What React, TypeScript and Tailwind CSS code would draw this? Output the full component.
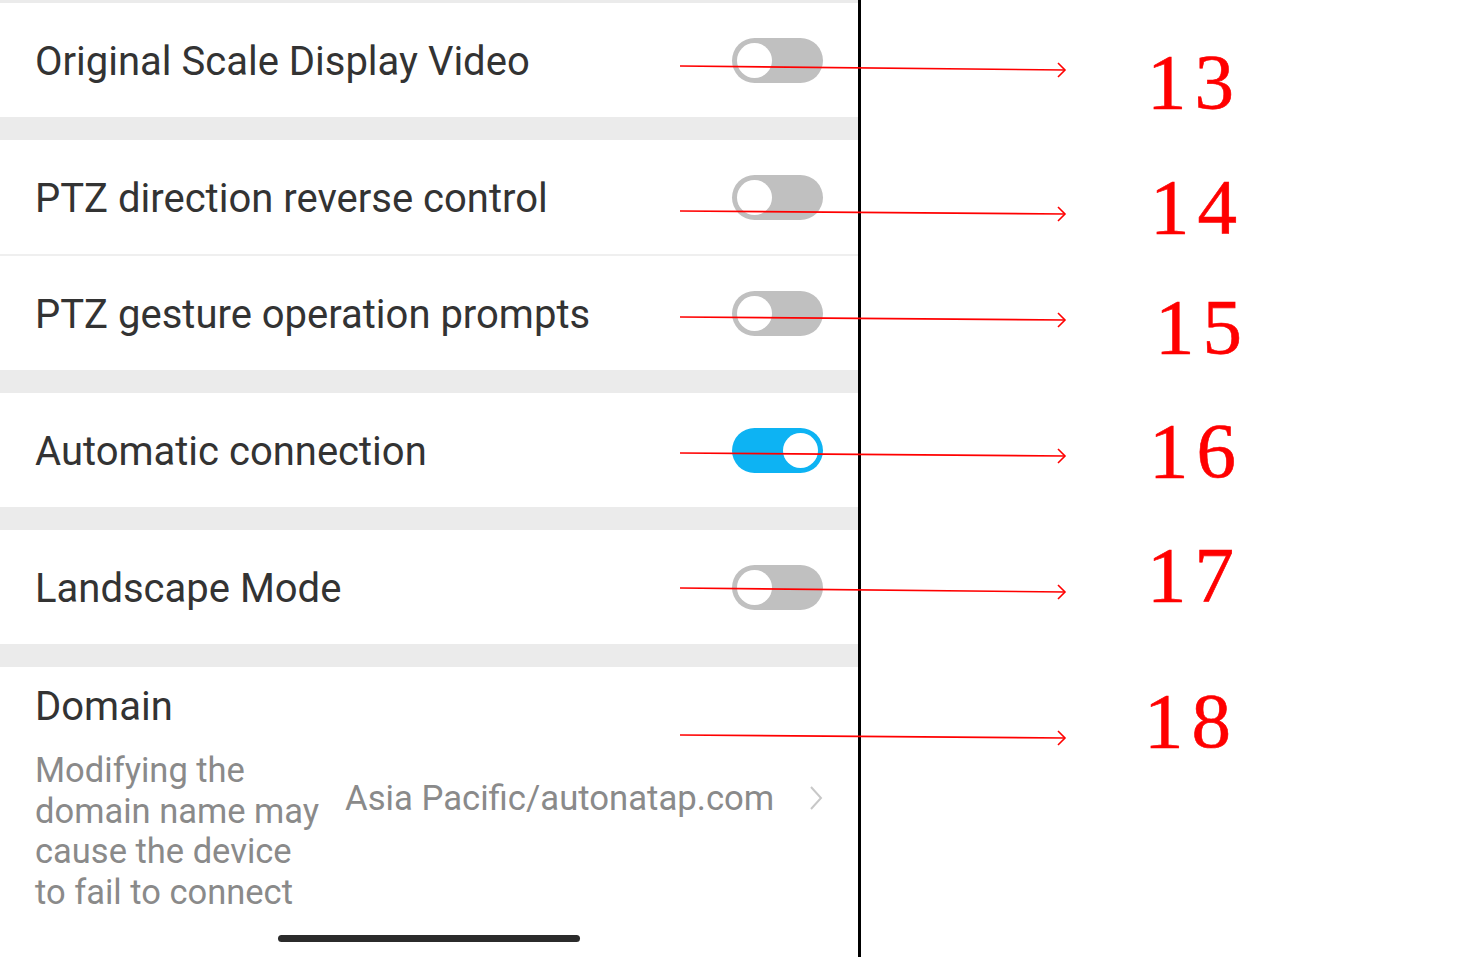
import React from "react";

const FONT = { fontFamily: "Roboto, 'Noto Sans', sans-serif" };

function Toggle({ on }: { on?: boolean }) {
  return (
    <div
      className={`flex items-center w-[91px] h-[45px] rounded-full px-[5px] ${
        on ? "bg-[#0db3f3] justify-end" : "bg-[#c0c0c0] justify-start"
      }`}
    >
      <div className="w-[35px] h-[35px] rounded-full bg-white" />
    </div>
  );
}

function SwitchRow({ label, on, divider }: { label: string; on?: boolean; divider?: boolean }) {
  return (
    <div
      className={`flex items-center justify-between bg-white h-[114px] pl-[35px] pr-[35px] ${
        divider ? "border-b-2 border-[#efefef] h-[116px]" : ""
      }`}
    >
      <span className="text-[40px] leading-[48px] text-[#333333] pt-[4px]">{label}</span>
      <Toggle on={on} />
    </div>
  );
}

// red annotation arrows + numbers laid over the screenshot
const marks = [
  { y1: 66, y2: 70, n: "13", x: 1147, base: 108 },
  { y1: 211, y2: 214, n: "14", x: 1150, base: 233 },
  { y1: 317, y2: 320, n: "15", x: 1155, base: 353 },
  { y1: 453, y2: 456, n: "16", x: 1149, base: 477 },
  { y1: 588, y2: 592, n: "17", x: 1147, base: 601 },
  { y1: 735, y2: 738, n: "18", x: 1144, base: 747 },
];

function Annotations() {
  return (
    <svg className="absolute inset-0 pointer-events-none" width="1469" height="957" viewBox="0 0 1469 957">
      {marks.map((m) => (
        <g key={m.n} stroke="#ff0000" strokeWidth="1.6" fill="none">
          <line x1="680" y1={m.y1} x2="1065" y2={m.y2} />
          <polyline points={`1058,${m.y2 - 7} 1065,${m.y2} 1058,${m.y2 + 7}`} />
          <text
            x={m.x}
            y={m.base}
            fill="#ff0000"
            stroke="#ff0000"
            strokeWidth="0.6"
            fontSize="79"
            letterSpacing="8"
            fontFamily="'Liberation Serif', 'Times New Roman', serif"
          >
            {m.n}
          </text>
        </g>
      ))}
    </svg>
  );
}

export default function App() {
  return (
    <div className="relative flex w-[1469px] h-[957px] bg-white overflow-hidden" style={FONT}>
      <div className="flex flex-col w-[861px] h-full bg-[#ebebeb] border-r-[3px] border-black pt-[3px]">
        <SwitchRow label="Original Scale Display Video" />
        <div className="h-[23px] shrink-0" />
        <SwitchRow label="PTZ direction reverse control" divider />
        <SwitchRow label="PTZ gesture operation prompts" />
        <div className="h-[23px] shrink-0" />
        <SwitchRow label="Automatic connection" on />
        <div className="h-[23px] shrink-0" />
        <SwitchRow label="Landscape Mode" />
        <div className="h-[23px] shrink-0" />

        {/* Domain */}
        <div className="flex-1 flex flex-col bg-white pl-[35px] pr-[35px] pt-[16px]">
          <span className="text-[40px] leading-[48px] text-[#333333]">Domain</span>
          <div className="flex items-start mt-[19px]">
            <p className="w-[290px] text-[34.5px] leading-[40.5px] text-[#8a8a8a]">
              Modifying the domain name may cause the device to fail to connect
            </p>
            <div className="flex-1 flex items-center justify-between mt-[28px] pl-[20px]">
              <span className="text-[34.7px] leading-[40px] text-[#8a8a8a]">
                Asia Pacific/autonatap.com
              </span>
              <svg width="14" height="26" viewBox="0 0 14 26" fill="none" stroke="#c8c8c8" strokeWidth="2">
                <polyline points="2,2 12,13 2,24" />
              </svg>
            </div>
          </div>
          <div className="flex-1" />
          <div className="self-center w-[302px] h-[7px] rounded-full bg-[#2b2b2b] mb-[15px] -ml-[1px]" />
        </div>
      </div>
      <div className="flex-1" />
      <Annotations />
    </div>
  );
}
